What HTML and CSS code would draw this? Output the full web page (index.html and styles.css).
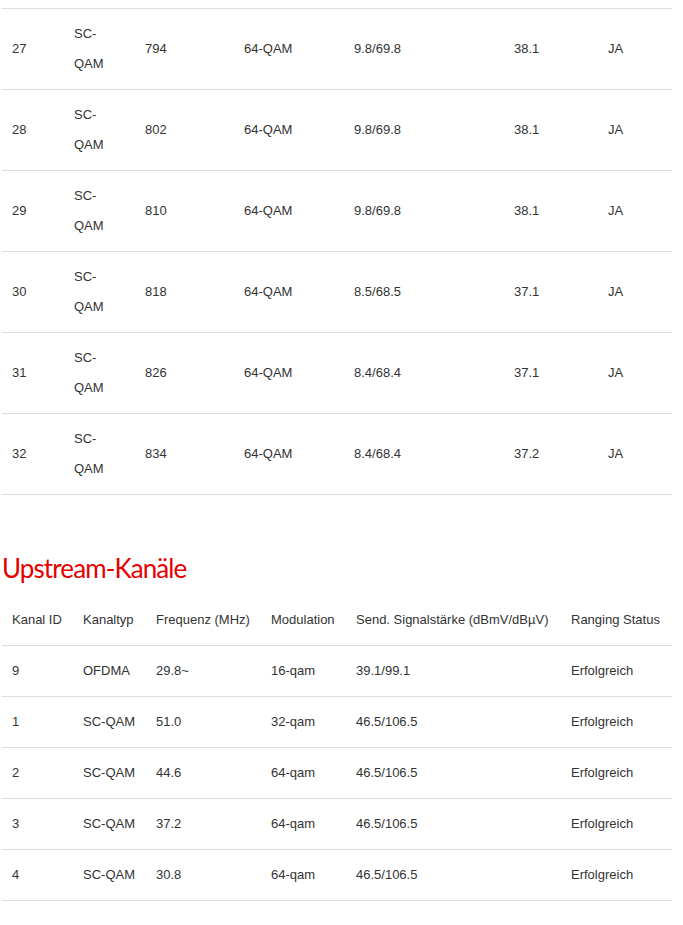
FILE: index.html
```html
<!DOCTYPE html>
<html lang="de">
<head>
<meta charset="utf-8">
<title>Kanäle</title>
<link rel="stylesheet" href="styles.css">
</head>
<body>
<div class="page">
  <table class="tbl down">
    <colgroup>
      <col class="d1"><col class="d2"><col class="d3"><col class="d4"><col class="d5"><col class="d6"><col class="d7">
    </colgroup>
    <tbody>
      <tr><td>27</td><td>SC-QAM</td><td>794</td><td>64-QAM</td><td>9.8/69.8</td><td>38.1</td><td>JA</td></tr>
      <tr><td>28</td><td>SC-QAM</td><td>802</td><td>64-QAM</td><td>9.8/69.8</td><td>38.1</td><td>JA</td></tr>
      <tr><td>29</td><td>SC-QAM</td><td>810</td><td>64-QAM</td><td>9.8/69.8</td><td>38.1</td><td>JA</td></tr>
      <tr><td>30</td><td>SC-QAM</td><td>818</td><td>64-QAM</td><td>8.5/68.5</td><td>37.1</td><td>JA</td></tr>
      <tr><td>31</td><td>SC-QAM</td><td>826</td><td>64-QAM</td><td>8.4/68.4</td><td>37.1</td><td>JA</td></tr>
      <tr><td>32</td><td>SC-QAM</td><td>834</td><td>64-QAM</td><td>8.4/68.4</td><td>37.2</td><td>JA</td></tr>
    </tbody>
  </table>

  <h2 class="section-title">Upstream-Kanäle</h2>

  <table class="tbl up">
    <colgroup>
      <col class="u1"><col class="u2"><col class="u3"><col class="u4"><col class="u5"><col class="u6">
    </colgroup>
    <thead>
      <tr><th>Kanal ID</th><th>Kanaltyp</th><th>Frequenz (MHz)</th><th>Modulation</th><th>Send. Signalstärke (dBmV/dBµV)</th><th>Ranging Status</th></tr>
    </thead>
    <tbody>
      <tr><td>9</td><td>OFDMA</td><td>29.8~</td><td>16-qam</td><td>39.1/99.1</td><td>Erfolgreich</td></tr>
      <tr><td>1</td><td>SC-QAM</td><td>51.0</td><td>32-qam</td><td>46.5/106.5</td><td>Erfolgreich</td></tr>
      <tr><td>2</td><td>SC-QAM</td><td>44.6</td><td>64-qam</td><td>46.5/106.5</td><td>Erfolgreich</td></tr>
      <tr><td>3</td><td>SC-QAM</td><td>37.2</td><td>64-qam</td><td>46.5/106.5</td><td>Erfolgreich</td></tr>
      <tr><td>4</td><td>SC-QAM</td><td>30.8</td><td>64-qam</td><td>46.5/106.5</td><td>Erfolgreich</td></tr>
    </tbody>
  </table>
</div>
</body>
</html>
```

FILE: styles.css
```css
html, body {
  margin: 0;
  padding: 0;
  background: #ffffff;
}

.page {
  padding: 8px 11px 25px 2px;
  font-family: "Liberation Sans", Arial, sans-serif;
  font-size: 13px;
  color: #333333;
}

.tbl {
  width: 670px;
  border-collapse: collapse;
  table-layout: fixed;
}

.tbl th,
.tbl td {
  padding: 10px;
  line-height: 30px;
  text-align: left;
  vertical-align: middle;
  font-weight: normal;
  border-bottom: 1px solid #dddddd;
}

.down tr:first-child td {
  border-top: 1px solid #dddddd;
}

.d1 { width: 62px; }
.d2 { width: 71px; }
.d3 { width: 99px; }
.d4 { width: 110px; }
.d5 { width: 160px; }
.d6 { width: 94px; }
.d7 { width: 74px; }

.u1 { width: 71px; }
.u2 { width: 73px; }
.u3 { width: 115px; }
.u4 { width: 85px; }
.u5 { width: 215px; }
.u6 { width: 111px; }

.section-title {
  margin: 58px 0 11px 0;
  font-family: Lato, "Open Sans", sans-serif;
  font-weight: normal;
  font-size: 26px;
  letter-spacing: -0.9px;
  line-height: 31px;
  color: #e60000;
}
```
